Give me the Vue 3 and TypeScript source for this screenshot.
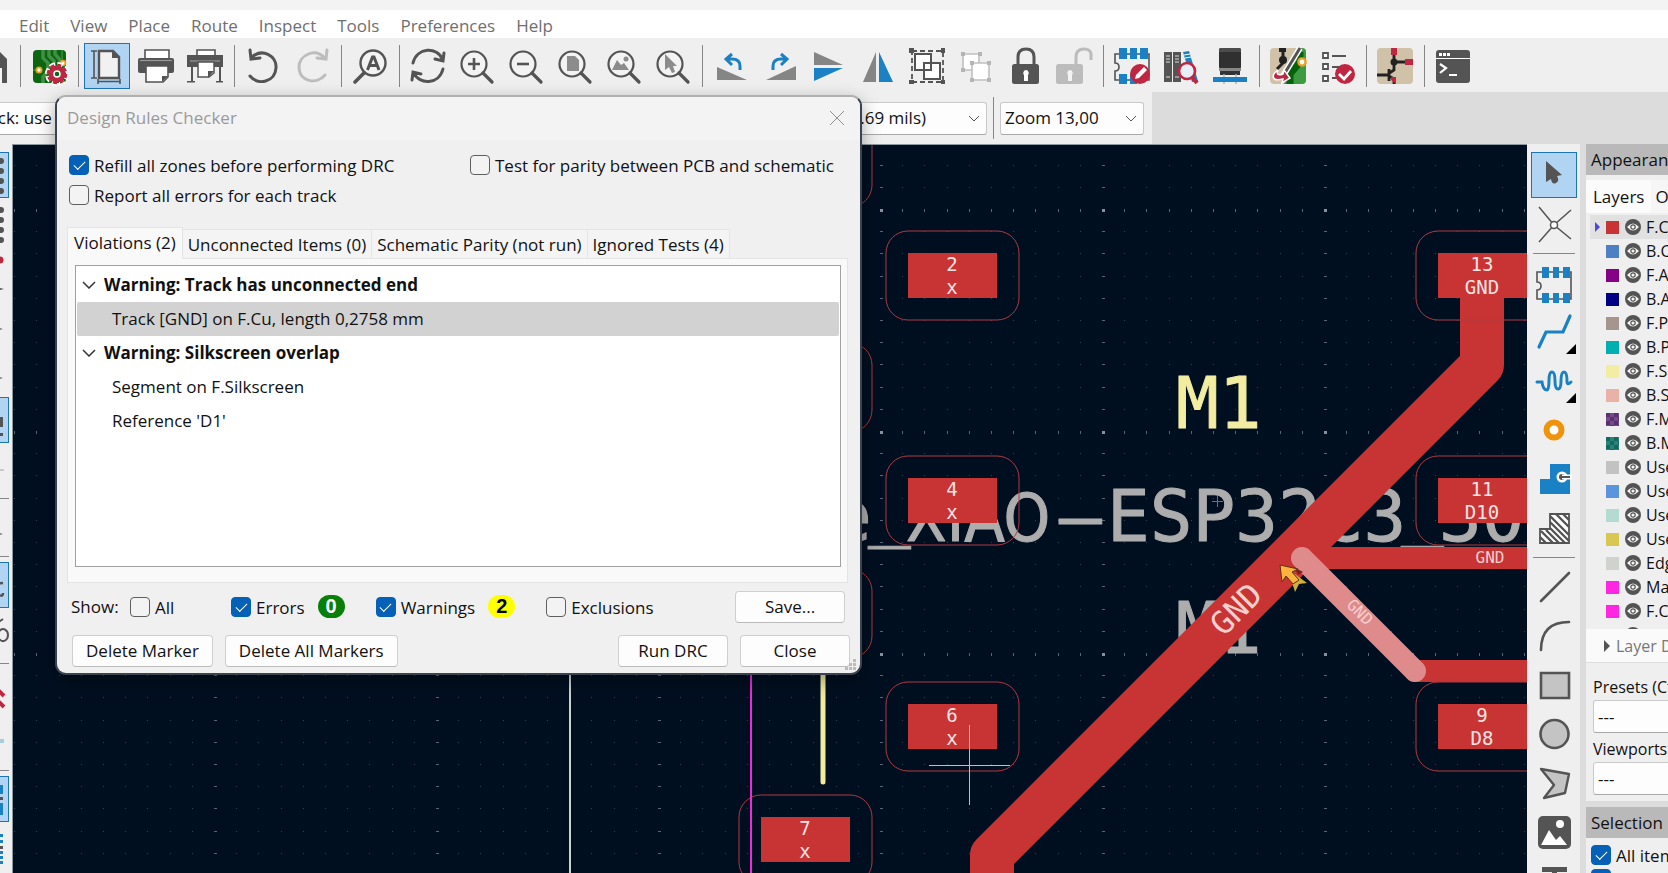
<script setup lang="ts">
import { ref } from 'vue'

const D = '#545454'
const B = '#1a81c4'
const R = '#bf2641'
const lens = `<circle cx="15" cy="16" r="12.5" fill="#f3f3f3" stroke="${D}" stroke-width="2.2"/><path d="M24 25l9 9" stroke="${D}" stroke-width="3.2" stroke-linecap="round"/>`
const footprint = `<path d="M1 7h34v27H1v-9q4 0 4-4t-4-4z" fill="none" stroke="${D}" stroke-width="1.6"/><g fill="${B}"><path d="M6 2h7v11H6zM17 2h6v11h-6zM27 2h7v11h-7zM6 28h7v10H6zM17 28h6v10h-6zM27 28h7v10h-7z"/></g>`

const icons: Record<string, string> = {
  save: `<path d="M2 3h24l8 8v24H2z" fill="${D}"/><path d="M9 20h20v15H9z" fill="#f5f5f5"/>`,
  board: `<rect x="2" y="2" width="33" height="33" rx="4" fill="#0c650f"/><path d="M12 2v8l5 5v8l-5 6v6M18 2v6l5 5v6M24 2v4l5 6v6" fill="none" stroke="#3f8f45" stroke-width="3.5"/><path d="M2 22h6M31 2v13" stroke="#2d8034" stroke-width="2"/><circle cx="8" cy="22" r="2.6" fill="#fff" stroke="#e8a01c" stroke-width="1.8"/><circle cx="32" cy="15" r="2.4" fill="#fff" stroke="#e8a01c" stroke-width="1.8"/><circle cx="26" cy="26" r="9" fill="none" stroke="#fff" stroke-width="6" stroke-dasharray="5 2.07"/><circle cx="26" cy="26" r="6" fill="#0c650f" stroke="${R}" stroke-width="5"/><circle cx="26" cy="26" r="8.6" fill="none" stroke="${R}" stroke-width="3.4" stroke-dasharray="3.8 2.95"/><circle cx="26" cy="26" r="3" fill="#0c650f" stroke="#fff" stroke-width="1.6"/>`,
  page: `<path d="M10 3h14l6 6v21H10z" fill="#f1f1f1" stroke="${D}" stroke-width="2.4"/><path d="M23 2v8h8z" fill="${D}"/><path d="M2 3h6M2 30h6M5 3v27M9 33.5h22M9 31v5M31 31v5" stroke="${D}" stroke-width="1.6"/>`,
  print: `<path d="M7 2h24v10H7z" fill="#fff" stroke="${D}" stroke-width="1.6"/><rect y="10" width="36" height="15" rx="2" fill="${D}"/><path d="M2 12.500h32" stroke="#9a9a9a" stroke-width="1.2"/><path d="M8 18h22v11l-5 5H8z" fill="#fff" stroke="${D}" stroke-width="1.600"/><path d="M30 28h-6v6z" fill="${D}"/>`,
  plot: `<path d="M10 2h18v6H10z" fill="#fff" stroke="${D}" stroke-width="1.600"/><path d="M0 7h36v12H0z" fill="${D}"/><path d="M3 13h30" stroke="#999" stroke-width="1.2"/><path d="M11 14h16v11l-5 4H11z" fill="#fff" stroke="${D}" stroke-width="1.500"/><path d="M27 23l-6 7v-7zM4 19h2v15H4zM32 19h2v15h-2zM0 33h8v1.600H0zM29 33h7v1.600h-7z" fill="${D}"/>`,
  undo: `<path d="M6 10C17-1 32 8 31 20c-1 14-18 18-26 8M5 2l1 9 9-1" fill="none" stroke="${D}" stroke-width="3" stroke-linecap="round"/>`,
  redo: `<path d="M31 10C20-1 5 8 5 19c0 15 18 18 26 8M33 2l-1 9-9-1" fill="none" stroke="#bdbdbd" stroke-width="3" stroke-linecap="round"/>`,
  find: `<circle cx="21" cy="15" r="12.5" fill="#f3f3f3" stroke="${D}" stroke-width="2.4"/><path d="M12 25l-9 9" stroke="${D}" stroke-width="3.600" stroke-linecap="round"/><path d="M15.500 22l5-13h1.500l5 13M17.500 17.500h7.500" fill="none" stroke="${D}" stroke-width="3"/>`,
  refresh: `<path d="M3 15C7-1 27-2 33 12M33 21C29 37 9 37 4 25M34 5l-1 8-8-2M2 32l1-8 8 2" fill="none" stroke="${D}" stroke-width="3" stroke-linecap="round"/>`,
  zoomin: `${lens}<path d="M9 16h12M15 10v12" stroke="${D}" stroke-width="2.6"/>`,
  zoomout: `${lens}<path d="M9 16h12" stroke="${D}" stroke-width="2.600"/>`,
  zoomfit: `${lens}<path d="M10 8h8l4 4v11H10z" fill="#8c8c8c"/>`,
  zoomimg: `${lens}<path d="M6 22l5-10 4 5 3-2 5 7z" fill="#8c8c8c"/><circle cx="20" cy="11" r="2.500" fill="#8c8c8c"/>`,
  zoomsel: `${lens}<path d="M10 6v16l4-3 3 6 3-1-2-6h4z" fill="#8c8c8c"/>`,
  rotl: `<path d="M4 19v13h30z" fill="#858585"/><path d="M27 22v-4q0-7-8-7h-5M19 6l-6 5 6 6" fill="none" stroke="${B}" stroke-width="3"/>`,
  rotr: `<path d="M34 18v14H4z" fill="#858585"/><path d="M11 22v-4q0-7 8-7h5M19 6l6 5-6 6" fill="none" stroke="${B}" stroke-width="3"/>`,
  flipv: `<path d="M3 4v13h29z" fill="#858585"/><path d="M3 33V20h29z" fill="${B}"/>`,
  fliph: `<path d="M3 34h13V4z" fill="#858585"/><path d="M33 34H19V4z" fill="${B}"/>`,
  group: `<path d="M3 3h31v31H3z" fill="none" stroke="${D}" stroke-width="1.800" stroke-dasharray="5 3"/><g fill="${D}"><path d="M0 0h5v5H0zM32 0h4v5h-4zM0 32h5v4H0zM32 32h4v4h-4z"/></g><path d="M6 6h16v16H6zM15 15h16v16H15z" fill="#fff" stroke="${D}" stroke-width="2"/>`,
  ungroup: `<path d="M5 6h16v16H5z" fill="#fff" stroke="#c0c0c0" stroke-width="1.600"/><path d="M14 15h17v17H14z" fill="#fff" stroke="#c0c0c0" stroke-width="1.600"/><g fill="#b5b5b5"><path d="M3 4h4v4H3zM20 4h4v4h-4zM3 20h4v4H3zM12 13h4v4h-4zM29 13h4v4h-4zM12 30h4v4h-4zM29 30h4v4h-4z"/></g>`,
  lock: `<path d="M11 17V9q0-8 8-8t8 8v8" fill="none" stroke="${D}" stroke-width="3"/><rect x="5" y="16" width="27" height="20" rx="2.500" fill="${D}"/><path d="M19 22a3 3 0 0 1 2 5v6h-4v-6a3 3 0 0 1 2-5z" fill="#fff"/>`,
  unlock: `<path d="M20 17V9q0-8 8-8t7 8v3" fill="none" stroke="#bcbcbc" stroke-width="3"/><rect y="16" width="27" height="20" rx="2.500" fill="#bcbcbc"/><path d="M14 22a3 3 0 0 1 2 5v6h-4v-6a3 3 0 0 1 2-5z" fill="#f3f3f3"/>`,
  fpedit: `<path d="M1 6h34v26H1v-9q4 0 4-4t-4-4z" fill="none" stroke="${D}" stroke-width="1.600"/><path d="M5 0h8v11H5zM16 0h7v11h-7zM26 0h8v11h-8zM5 26h8v10H5zM16 26h7v10h-7z" fill="${B}"/><circle cx="26" cy="26" r="10" fill="${R}"/><path d="M21 31l1-4 8-8 3 3-8 8z" fill="#fff"/>`,
  books: `<path d="M1 4h8v30H1zM10 4h8v30h-8z" fill="${D}"/><path d="M3 8h4M3 11h4M3 14h4M3 29h4M12 8h4M12 11h4M12 14h4M12 29h4" stroke="#ddd"/><path d="M20 4l6-1 9 30-6 1z" fill="${B}"/><path d="M21 7l6-1M22 10l6-1" stroke="#fff"/><circle cx="24" cy="23" r="8" fill="#e8eef8" stroke="${R}" stroke-width="2.600"/><path d="M29 29l5 6" stroke="${R}" stroke-width="4"/>`,
  chip: `<rect x="7" y="0" width="22" height="21" rx="2" fill="#303030"/><path d="M7 4V2q0-2 2-2h18q2 0 2 2v2z" fill="#4c4c4c"/><path d="M8 22h20v5H8z" fill="#333"/><path d="M7 20h22v3H7z" fill="#888"/><path d="M12 26v10M24 26v10" stroke="#a8b8c4" stroke-width="1.500"/><path d="M1 29h34v5H1z" fill="${B}"/>`,
  update: `<rect width="36" height="36" rx="4" fill="#cfc2a8"/><path d="M30 0h2q4 0 4 4v28q0 4-4 4H14z" fill="#3c9b41"/><path d="M30 4v10l-10 12v10" stroke="#07610a" stroke-width="7" fill="none"/><circle cx="32" cy="14" r="3.600" fill="#fff" stroke="#eaa127" stroke-width="2.400"/><path d="M13 0v15l-6 6" stroke="#222" stroke-width="3" fill="none"/><circle cx="13" cy="12" r="4" fill="#222"/><path d="M9 0h7v4H9z" fill="#222"/><path d="M30 0L13 28" stroke="#fff" stroke-width="6"/><path d="M30 0L13 28" stroke="${D}" stroke-width="3"/><path d="M8 22c-7 5-7 12 5 9l-1 4 8-5-6-8-1 4c-5 2-7 0-5-4z" fill="${R}" stroke="#fff" stroke-width="1.500"/>`,
  drc: `<path d="M4 5h5v5H4zM4 16h5v5H4zM4 28h5v5H4z" fill="#fff" stroke="${D}" stroke-width="1.800"/><path d="M13 8h14M13 19h8M13 30h6" stroke="${D}" stroke-width="1.800"/><circle cx="26" cy="26" r="10" fill="${R}"/><path d="M20 26l5 5 7-8" fill="none" stroke="#fff" stroke-width="2.800"/>`,
  sch: `<rect width="36" height="36" rx="4" fill="#cfc2a8"/><path d="M17 6v16l-6 4M17 14h12M0 27h12M12 21v12M12 28l5 3v5" stroke="#222" stroke-width="2.800" fill="none"/><path d="M14 0h6v7h-6zM28 11h8v6h-8zM14 29h5v7l-5-4z" fill="${R}"/><circle cx="17" cy="14" r="3.500" fill="#222"/>`,
  term: `<rect x="1" y="2" width="34" height="33" rx="3" fill="${D}"/><path d="M1 10.500h34" stroke="#fff"/><path d="M4 5h3v3H4zM8 5h3v3H8zM12 5h3v3h-3z" fill="#fff"/><path d="M5 16l6 4-6 5M14 27h8" fill="none" stroke="#fff" stroke-width="2.200"/>`,
  arrow: `<path d="M10 4v21l5-3q1 6 5 4t1-7l5-1z" fill="${D}"/>`,
  ratsnest: `<path d="M3 1l15 18L3 36M35 4L18 19l17 14" fill="none" stroke="${D}" stroke-width="1.500"/><circle cx="18" cy="19" r="3.500" fill="#fff" stroke="${D}" stroke-width="1.500"/>`,
  fp: footprint,
  route: `<path d="M3 33l7-15h17l7-16" fill="none" stroke="${B}" stroke-width="3.200" stroke-linecap="round"/>`,
  tune: `<path d="M1 19h5q1 8 5 8 2 0 2-10 0-8 3-8t3 9q0 8 3 8t3-8q0-9 3-9t3 9q0 5 4 1" fill="none" stroke="${B}" stroke-width="3" stroke-linecap="round"/>`,
  via: `<circle cx="18" cy="18" r="7.500" fill="#fff" stroke="#f0930c" stroke-width="6"/>`,
  zone: `<path d="M14 3h20v30H4V18h10z" fill="${B}"/><circle cx="26" cy="16" r="5.500" fill="#fff"/><circle cx="26" cy="16" r="3" fill="${D}"/><path d="M26 16h10" stroke="#fff" stroke-width="5"/><path d="M26 16h8" stroke="${D}" stroke-width="2"/>`,
  rule: `<path d="M14 4h19v29H4V19h10z" fill="#fff" stroke="${D}" stroke-width="1.800"/><path d="M14 6l19 19M14 12l19 19M14 18l15 15M10 20l13 13M5 21l12 12M4 27l6 6M20 4l13 13M27 4l6 6" stroke="${D}" stroke-width="2.400"/>`,
  line: `<path d="M5 32L33 4" stroke="${D}" stroke-width="2.600" stroke-linecap="round"/>`,
  arc: `<path d="M5 32Q5 4 33 4" fill="none" stroke="${D}" stroke-width="2.600" stroke-linecap="round"/>`,
  rect: `<path d="M5 6h28v25H5z" fill="#c4c4c4" stroke="${D}" stroke-width="2.600"/>`,
  circle: `<circle cx="18.500" cy="18" r="14" fill="#c4c4c4" stroke="${D}" stroke-width="2.600"/>`,
  poly: `<path d="M5 4l28 5-4 19-21 5 10-13z" fill="#c4c4c4" stroke="${D}" stroke-width="2.400" stroke-linejoin="round"/>`,
  image: `<rect x="2" y="2" width="33" height="33" rx="5" fill="${D}"/><path d="M5 31l8-15 7 10 4-4 7 9z" fill="#fff"/><circle cx="24" cy="10" r="4" fill="#fff"/>`,
  text: `<path d="M6 4h25v5H21v24h-5V9H6z" fill="${D}"/>`,
  dots: `<g fill="${D}"><circle cx="33" cy="4" r="3"/><circle cx="33" cy="14" r="3"/><circle cx="33" cy="24" r="3"/><circle cx="33" cy="34" r="3"/></g>`,
  polar: `<circle cx="32" cy="5" r="3.500" fill="${R}"/><path d="M28 32l8 2-8 2z" fill="${D}"/>`,
  tick: `<path d="M28 23l7 2-7 2z" fill="${D}"/>`,
  mm: `<path d="M31 15h4v10h-4zM29 31h6v3h-6z" fill="${D}"/>`,
  thin: `<path d="M24 19h12" stroke="#bbb" stroke-width="1.500"/>`,
  curve: `<path d="M26 17l9-1M32 28q3 2 3-2" stroke="${D}" stroke-width="2.500" fill="none"/>`,
  percent: `<path d="M28 8l7-5M30 19a5 6 0 1 1 0 .1" stroke="${D}" stroke-width="2" fill="none"/>`,
  chev: `<path d="M28 14l8 8M28 25l8 8" stroke="${R}" stroke-width="4"/>`,
  bar: `<path d="M26 16h10v4H26z" fill="#a8cde0"/>`,
  stack: `<path d="M26 4h9v9h-9zM26 22h9v12h-9z" fill="${B}"/><path d="M26 16h9v3h-9z" fill="${D}"/>`,
  bars: `<path d="M26 4h9v3h-9zM26 10h9v3h-9zM26 21h9v3h-9zM26 26h9v3h-9zM26 31h9v3h-9z" fill="${B}"/><path d="M26 16h9v3h-9z" fill="${D}"/>`,
}

interface Tool { id: string; label: string; on?: boolean; more?: boolean }
const sep: Tool = { id: '', label: '' }
const t = (id: string, label: string, extra: Partial<Tool> = {}): Tool => ({ id, label, ...extra })

const menus = ['Edit', 'View', 'Place', 'Route', 'Inspect', 'Tools', 'Preferences', 'Help']
const mainTools: Tool[] = [
  t('save', 'Save'), sep, t('board', 'Board setup'), sep,
  t('page', 'Page settings', { on: true }), t('print', 'Print'), t('plot', 'Plot'), sep,
  t('undo', 'Undo'), t('redo', 'Redo'), sep, t('find', 'Find'), sep,
  t('refresh', 'Refresh'), t('zoomin', 'Zoom in'), t('zoomout', 'Zoom out'), t('zoomfit', 'Zoom to fit'),
  t('zoomimg', 'Zoom to objects'), t('zoomsel', 'Zoom to selection'), sep,
  t('rotl', 'Rotate left'), t('rotr', 'Rotate right'), t('flipv', 'Mirror vertically'), t('fliph', 'Mirror horizontally'),
  t('group', 'Group'), t('ungroup', 'Ungroup'), t('lock', 'Lock'), t('unlock', 'Unlock'), sep,
  t('fpedit', 'Footprint editor'), t('books', 'Footprint libraries'), t('chip', '3D viewer'), sep,
  t('update', 'Update PCB from schematic'), t('drc', 'Design rules checker'), sep,
  t('sch', 'Schematic editor'), sep, t('term', 'Scripting console'),
]
const leftTools: Tool[] = [
  t('dots', 'Grid', { on: true }), t('dots', 'Grid overrides'), t('polar', 'Polar coordinates'), t('tick', 'Inches'),
  t('tick', 'Mils'), t('mm', 'Millimetres', { on: true }), t('thin', 'Full crosshair'), sep, t('tick', 'Free angle'), sep,
  t('curve', 'Ratsnest', { on: true }), t('percent', 'Curved ratsnest'), sep, t('chev', 'Inactive layers'), t('bar', 'Net highlight'), sep,
  t('stack', 'Zone fills', { on: true }), t('bars', 'Zone outlines'),
]
const rightTools: Tool[] = [
  t('arrow', 'Select', { on: true }), t('ratsnest', 'Local ratsnest'), sep, t('fp', 'Add footprint'),
  t('route', 'Route tracks', { more: true }), t('tune', 'Tune length', { more: true }), t('via', 'Add via'),
  t('zone', 'Add zone'), t('rule', 'Add rule area'), sep, t('line', 'Draw line'), t('arc', 'Draw arc'),
  t('rect', 'Draw rectangle'), t('circle', 'Draw circle'), t('poly', 'Draw polygon'), t('image', 'Add image'), t('text', 'Add text'),
]

const layers = [
  ['F.Cu', '#c83434'], ['B.Cu', '#4d7fc4'], ['F.Adhesive', '#840084'], ['B.Adhesive', '#000084'],
  ['F.Paste', '#a4968f'], ['B.Paste', '#00b0b0'], ['F.Silkscreen', '#f2eda1'], ['B.Silkscreen', '#e8b2a7'],
  ['F.Mask', '#5a2f73'], ['B.Mask', '#0f6b62'], ['User.Drawings', '#c2c2c2'], ['User.Comments', '#5994dc'],
  ['User.Eco1', '#b4dbd2'], ['User.Eco2', '#d8c852'], ['Edge.Cuts', '#d0d2cd'], ['Margin', '#ff26e2'],
  ['F.Courtyard', '#ff26e2'], ['B.Courtyard', '#26e9ff'],
].map(([name, color]) => ({ name, color, checked: name.endsWith('Mask') }))

const pads = [
  { x: 908, y: 253, n: '2', net: 'x' }, { x: 908, y: 478, n: '4', net: 'x' }, { x: 908, y: 704, n: '6', net: 'x' },
  { x: 761, y: 817, n: '7', net: 'x' }, { x: 761, y: 591, n: '', net: '' }, { x: 761, y: 365, n: '', net: '' },
  { x: 761, y: 140, n: '', net: '' },
  { x: 1438, y: 253, n: '13', net: 'GND' }, { x: 1438, y: 478, n: '11', net: 'D10' }, { x: 1438, y: 704, n: '9', net: 'D8' },
]

const steps = Array.from({ length: 10 }, (_, i) => Math.round(i * 22.2))
const gridDots = steps.flatMap((x, i) => steps.map((y, j) => ({
  x, y, w: i === 0 ? 3 : 1, h: j === 0 ? 3 : 1, o: i === 0 && j === 0 ? 0.75 : i === 0 || j === 0 ? 0.5 : 0.3,
})))

const tabs = ['Violations (2)', 'Unconnected Items (0)', 'Schematic Parity (not run)', 'Ignored Tests (4)']
const activeTab = ref(0)
const violations = [
  { title: 'Warning: Track has unconnected end', items: ['Track [GND] on F.Cu, length 0,2758 mm'] },
  { title: 'Warning: Silkscreen overlap', items: ['Segment on F.Silkscreen', "Reference 'D1'"] },
]
const selected = ref('Track [GND] on F.Cu, length 0,2758 mm')
const refill = ref(true)
const reportAll = ref(false)
const parity = ref(false)
const showAll = ref(false)
const showErrors = ref(true)
const showWarnings = ref(true)
const showExclusions = ref(false)
const allItems = ref(true)
const lockedItems = ref(true)
</script>

<template>
  <div class="app">
    <div class="strip"></div>
    <nav class="menubar">
      <button v-for="m in menus" :key="m" type="button">{{ m }}</button>
    </nav>
    <div class="toolbar">
      <template v-for="(tool, i) in mainTools" :key="i">
        <span v-if="!tool.id" class="vsep"></span>
        <button v-else type="button" class="tool" :class="{ on: tool.on }" :aria-label="tool.label">
          <svg viewBox="0 0 36 36" v-html="icons[tool.id]"></svg>
        </button>
      </template>
    </div>
    <div class="auxbar">
      <div class="aux-controls">
        <div class="combo track">
          <select aria-label="Track width"><option>Track: use netclass width</option></select>
        </div>
        <button type="button" class="tool on auto" aria-label="Automatic track width"></button>
        <div class="combo viasize">
          <select aria-label="Grid"><option>Grid: 0,5000 mm (19.69 mils)</option></select>
          <svg viewBox="0 0 12 8"><path d="M1 1l5 5 5-5" /></svg>
        </div>
        <span class="vsep"></span>
        <div class="combo zoom">
          <select aria-label="Zoom"><option>Zoom 13,00</option></select>
          <svg viewBox="0 0 12 8"><path d="M1 1l5 5 5-5" /></svg>
        </div>
      </div>
    </div>

    <div class="work">
      <div class="side left">
        <template v-for="(tool, i) in leftTools" :key="i">
          <span v-if="!tool.id" class="hsep"></span>
          <button v-else type="button" class="tool" :class="{ on: tool.on }" :aria-label="tool.label">
            <svg viewBox="0 0 36 36" v-html="icons[tool.id]"></svg>
          </button>
        </template>
      </div>

      <div class="board">
        <svg class="pcb">
          <defs>
            <pattern id="grid" width="222" height="222" patternUnits="userSpaceOnUse" x="214" y="209">
              <rect v-for="(d, i) in gridDots" :key="i" :x="d.x" :y="d.y" :width="d.w" :height="d.h" fill="#b4bcc4" :opacity="d.o" />
            </pattern>
          </defs>
          <g transform="translate(-13 -145)">
            <rect width="4000" height="3000" fill="url(#grid)" />
            <g class="fab">
              <text x="829" y="541">e</text>
              <text x="868" y="532">_</text>
              <text class="tight" x="906" y="541">XIAO</text>
              <text x="1059" y="541">–</text>
              <text x="1107" y="541">ESP32C3</text>
              <text x="1401" y="532">_</text>
              <text x="1439" y="541">30</text>
              <text x="1176" y="653">M1</text>
            </g>
            <text class="silk" x="1176" y="428">M1</text>
            <g class="tracks">
              <path d="M1482 275V365L992 855V1200" stroke-width="44" />
              <path d="M1302 558H1900M1415 671H1900" stroke-width="22" />
            </g>
            <path class="hot" d="M1302 558L1415 671" />
            <g v-for="(p, i) in pads" :key="i">
              <rect class="clearance" :x="p.x - 22" :y="p.y - 22" width="133" height="89" rx="22" />
              <rect class="pad" :x="p.x" :y="p.y" width="89" height="45" />
              <template v-if="p.n">
                <text class="padtext" :x="p.x + 44" :y="p.y + 18">{{ p.n }}</text>
                <text class="padtext" :x="p.x + 44" :y="p.y + 41">{{ p.net }}</text>
              </template>
            </g>
            <text class="net" x="1490" y="563">GND</text>
            <text class="net" transform="translate(1356 616) rotate(45)">GND</text>
            <text class="net big" transform="translate(1244 617) rotate(-45)">GND</text>
            <path d="M570 145V1200" stroke="#cdd2d0" stroke-width="2" />
            <path d="M751 145V1200" stroke="#ee2bdc" stroke-width="2" />
            <path d="M823 600V782" stroke="#f0eb9d" stroke-width="5" stroke-linecap="round" />
            <path d="M929 765.500H1010M969.500 725V805" stroke="#b9c0c6" />
            <path d="M1212 501.500H1223M1217.500 496V507" stroke="#d32bd6" />
            <path d="M1294 567l9 5-5 3z" fill="#7a2020" />
            <path d="M1288 569l19 14-8 1-4 8z" fill="#d3ae38" />
            <path d="M1280 565l18 4-6 3 7 8-6 4-7-8-4 6z" fill="#fbb33b" stroke="#5e3014" />
          </g>
        </svg>
      </div>

      <div class="side right">
        <template v-for="(tool, i) in rightTools" :key="i">
          <span v-if="!tool.id" class="hsep"></span>
          <button v-else type="button" class="tool" :class="{ on: tool.on, more: tool.more }" :aria-label="tool.label">
            <svg viewBox="0 0 36 36" v-html="icons[tool.id]"></svg>
          </button>
        </template>
      </div>

      <aside class="panel">
        <h2>Appearance</h2>
        <div class="ptabs">
          <button type="button" class="active">Layers</button>
          <button type="button">Objects</button>
        </div>
        <ul class="layers">
          <li v-for="(l, i) in layers" :key="l.name" :class="{ current: i === 0 }">
            <span class="marker"></span>
            <span class="swatch" :class="{ checked: l.checked }" :style="{ backgroundColor: l.color }"></span>
            <button type="button" class="eye" :aria-label="'Toggle ' + l.name">
              <svg viewBox="0 0 16 16">
                <circle cx="8" cy="8" r="8" fill="#545454" />
                <path d="M2 8q6-7 12 0-6 7-12 0z" fill="#f4f4f4" />
                <circle cx="8" cy="8" r="2.200" fill="#f4f4f4" stroke="#545454" stroke-width="1.200" />
              </svg>
            </button>
            <span>{{ l.name }}</span>
          </li>
        </ul>
        <button type="button" class="expander">
          <svg viewBox="0 0 6 12"><path d="M0 0l6 6-6 6z" /></svg>Layer Display Options
        </button>
        <div class="presets">
          <label for="presets">Presets (Ctrl+Tab):</label>
          <select id="presets"><option>---</option></select>
          <label for="viewports">Viewports (Shift+Tab):</label>
          <select id="viewports"><option>---</option></select>
        </div>
        <h2 class="filter">Selection Filter</h2>
        <div class="filters">
          <label class="check"><input v-model="allItems" type="checkbox" /><span>All items</span></label>
          <label class="check"><input v-model="lockedItems" type="checkbox" /><span>Locked items</span></label>
        </div>
      </aside>
    </div>

    <section class="dialog" role="dialog" aria-labelledby="dlg-title">
      <header>
        <h1 id="dlg-title">Design Rules Checker</h1>
        <button type="button" aria-label="Close window">
          <svg viewBox="0 0 16 16"><path d="M1 1l14 14M15 1L1 15" /></svg>
        </button>
      </header>
      <div class="options">
        <label class="check"><input v-model="refill" type="checkbox" /><span>Refill all zones before performing DRC</span></label>
        <label class="check"><input v-model="parity" type="checkbox" /><span>Test for parity between PCB and schematic</span></label>
        <label class="check"><input v-model="reportAll" type="checkbox" /><span>Report all errors for each track</span></label>
      </div>
      <div class="tabs" role="tablist">
        <button v-for="(name, i) in tabs" :key="name" type="button" role="tab" :aria-selected="activeTab === i"
          :class="{ active: activeTab === i }" @click="activeTab = i">{{ name }}</button>
      </div>
      <div class="pane">
        <ul class="tree">
          <li v-for="v in violations" :key="v.title">
            <div class="node">
              <svg viewBox="0 0 14 8"><path d="M1 1l6 6 6-6" /></svg>{{ v.title }}
            </div>
            <ul>
              <li v-for="item in v.items" :key="item" class="leaf" :class="{ sel: selected === item }" @click="selected = item">{{ item }}</li>
            </ul>
          </li>
        </ul>
      </div>
      <div class="show">
        <span class="lead">Show:</span>
        <label class="check all"><input v-model="showAll" type="checkbox" /><span>All</span></label>
        <label class="check"><input v-model="showErrors" type="checkbox" /><span>Errors</span></label>
        <span class="badge green">0</span>
        <label class="check"><input v-model="showWarnings" type="checkbox" /><span>Warnings</span></label>
        <span class="badge yellow">2</span>
        <label class="check"><input v-model="showExclusions" type="checkbox" /><span>Exclusions</span></label>
        <button type="button" class="btn short push">Save...</button>
      </div>
      <footer>
        <button type="button" class="btn">Delete Marker</button>
        <button type="button" class="btn">Delete All Markers</button>
        <button type="button" class="btn short push">Run DRC</button>
        <button type="button" class="btn short">Close</button>
      </footer>
      <svg class="grip" viewBox="0 0 12 12"><path d="M8 0h3v3H8zM4 4h3v3H4zM8 4h3v3H8zM0 8h3v3H0zM4 8h3v3H4zM8 8h3v3H8z" /></svg>
    </section>
  </div>
</template>

<style>
body { margin: 0; overflow: hidden; }
</style>

<style scoped>
* { box-sizing: border-box; }
.app {
  position: relative;
  height: 100vh;
  display: flex;
  flex-direction: column;
  overflow: hidden;
  background: #efefef;
  color: #111;
  font: 17px/24px "Open Sans", "Noto Sans", sans-serif;
}
button, select, input { font: inherit; color: inherit; margin: 0; }
button { border: 0; background: none; padding: 0; white-space: nowrap; }
ul { list-style: none; margin: 0; padding: 0; }
h1, h2 { margin: 0; font-size: 17px; font-weight: 400; white-space: nowrap; }

.strip { height: 10px; background: #f3f3f3; flex: none; }
.menubar { display: flex; flex: none; height: 28px; padding-left: 8px; background: #fff; color: #6f6f6f; }
.menubar button { padding: 3px 10px 0 11px; }

.toolbar { display: flex; flex: none; gap: 3px; height: 54px; padding-top: 5px; margin-left: -32px; }
.tool { position: relative; flex: none; width: 46px; height: 46px; display: grid; place-items: center; border: 1px solid transparent; }
.tool.on { background: #b1d4f2; border-color: #1c74b8; }
.tool svg { width: 36px; height: 36px; display: block; overflow: visible; }
.tool.more::after { content: ""; position: absolute; right: 0; bottom: 0; border: 5px solid #000; border-top-color: transparent; border-left-color: transparent; }
.vsep { flex: none; width: 6px; height: 42px; margin-top: 2px; background: linear-gradient(#868686, #868686) center / 1px 100% no-repeat; }
.hsep { flex: none; height: 6px; width: 42px; background: linear-gradient(#868686, #868686) center / 100% 1px no-repeat; }
.right .hsep { height: 7px; }

.auxbar { flex: none; height: 52px; background: #dcdcdc; display: flex; }
.aux-controls { display: flex; align-items: center; padding-right: 8px; background: #efefef; width: 1152px; }
.aux-controls .vsep { margin: 0 4px 0 3px; }
.combo { position: relative; height: 33px; }
.combo select, .presets select {
  appearance: none;
  width: 100%;
  height: 33px;
  padding: 0 4px;
  background: #fdfdfd;
  border: 1px solid #c9c9c9;
  border-bottom-color: #a8a8a8;
  border-radius: 3px;
}
.combo svg { position: absolute; right: 7px; top: 13px; width: 12px; height: 8px; fill: none; stroke: #555; }
.track { width: 231px; margin-left: -33px; }
.auto { align-self: flex-start; margin: 3px 0 0 3px; }
.viasize { flex: 1; margin-left: 3px; }
.viasize select { text-align-last: right; padding-right: 60px; }
.zoom { width: 144px; }

.work { flex: 1; min-height: 0; display: grid; grid-template-columns: 12px minmax(0, 1fr) 53px 88px; }
.side { display: flex; flex-direction: column; align-items: center; gap: 3px; padding-top: 8px; overflow: hidden; min-height: 0; }
.left { align-items: flex-end; padding-right: 3px; }
.board { background: #000f20; border: solid #8c9a9f; border-width: 1px 0 0 1px; min-height: 0; overflow: hidden; }
.pcb { display: block; width: 100%; height: 100%; }
.pcb text { font-family: "DejaVu Sans Mono", monospace; }
.fab text, .silk { font-size: 71px; fill: #adadad; stroke: #adadad; stroke-width: 1px; stroke-linejoin: round; }
.fab .tight { font-family: "DejaVu Sans Condensed", "DejaVu Sans", sans-serif; font-size: 66px; }
.silk { fill: #f2eda1; stroke: #f2eda1; }
.tracks path { fill: none; stroke: #c83434; stroke-linecap: round; stroke-linejoin: round; }
.hot { stroke: #df8b8c; stroke-width: 22px; stroke-linecap: round; }
.clearance { fill: none; stroke: #b03a41; }
.pad { fill: #c83434; }
.padtext { font-size: 19px; fill: #fbe3e3; text-anchor: middle; }
.net { font-size: 16px; fill: #f6cfcf; text-anchor: middle; }
.net.big { font-size: 32px; }

.panel { border-left: 6px solid #dcdcdc; display: flex; flex-direction: column; overflow: hidden; white-space: nowrap; min-height: 0; }
.panel > * { flex: none; }
.panel h2 { height: 31px; padding: 4px 5px; background: #b9b9b9; }
.panel h2.filter { border-top: 6px solid #dcdcdc; height: 37px; }
.ptabs { display: flex; padding-top: 5px; }
.ptabs button { height: 33px; padding: 0 4px; background: #f6f6f6; }
.ptabs .active { width: 75px; padding: 0 7px; text-align: left; background: #fbfbfb; }
.layers { height: 416px; padding-top: 2px; margin-left: 4px; overflow: hidden; font-size: 16px; }
.layers li { display: flex; align-items: center; height: 24px; }
.layers .current { background: #e1e1e1; }
.marker { flex: none; width: 16px; height: 10px; }
.current .marker::before { content: ""; display: block; width: 0; margin-left: 5px; border: 5px solid transparent; border-left-color: #4c48e0; border-right: 0; }
.swatch { flex: none; width: 13px; height: 13px; margin-right: 6px; }
.swatch.checked { background-image: conic-gradient(rgba(255, 255, 255, .14) 25%, transparent 0 50%, rgba(255, 255, 255, .14) 0 75%, transparent 0); background-size: 8px 8px; }
.eye { width: 16px; height: 16px; margin-right: 5px; flex: none; }
.eye svg { display: block; width: 16px; height: 16px; }
.expander { display: flex; align-items: center; gap: 6px; height: 34px; padding-left: 18px; background: #fafafa; color: #777; border-bottom: 1px solid #ddd; text-align: left; font-size: 16px; }
.expander svg { width: 6px; height: 12px; fill: #545454; flex: none; }
.presets { display: grid; padding: 12px 0 2px 7px; width: 260px; }
.presets label { height: 25px; font-size: 16px; }
.presets select { margin-bottom: 4px; }
.filters { display: grid; gap: 4px; padding: 7px 5px; }

.check { display: flex; align-items: center; gap: 5px; height: 20px; white-space: nowrap; }
.check span { padding-top: 2px; }
.check input { appearance: none; flex: none; width: 20px; height: 20px; border: 1px solid #5f5f5f; border-radius: 4px; background: #f3f3f3; display: grid; place-items: center; }
.check input:checked { background: #0560b8; border-color: #0560b8; }
.check input:checked::after { content: ""; width: 10px; height: 5px; border: solid #fff; border-width: 0 0 1px 1px; transform: translateY(-1px) rotate(-45deg); }

.dialog {
  position: absolute;
  left: 55px;
  top: 95px;
  width: 807px;
  display: flex;
  flex-direction: column;
  background: #f0f0f0;
  border: 2px solid #9c9fa0;
  border-color: #b0b0b0 #3a4450 #3a4450;
  border-radius: 11px;
  box-shadow: 0 6px 18px rgba(0, 0, 0, .35);
}
.dialog header { display: flex; justify-content: space-between; align-items: center; height: 43px; padding: 0 15px 2px 10px; background: #f3f3f3; border-radius: 9px 9px 0 0; color: #9a9a9a; }
.dialog header button, .dialog header svg { width: 16px; height: 16px; display: block; }
.dialog header svg { fill: none; stroke: #8f8f8f; }
.options { display: grid; grid-template-columns: 401px 1fr; row-gap: 10px; padding: 15px 12px 22px; }
.tabs { display: flex; align-items: flex-end; padding-left: 10px; height: 31px; }
.tabs button { height: 29px; padding: 2px 5px 0; background: #f4f4f4; border: 1px solid #e4e4e4; border-left: 0; border-bottom: 0; }
.tabs .active { height: 32px; margin-bottom: -1px; padding: 0 6px 1px; background: #f9f9f9; border-left: 1px solid #e4e4e4; position: relative; }
.pane { margin: 0 12px 0 10px; padding: 6px 6px 15px 7px; background: #f9f9f9; border: 1px solid #e4e4e4; }
.tree { height: 302px; padding: 2px 1px; background: #fff; border: 1px solid #a0a0a0; }
.node, .leaf { height: 34px; line-height: 34px; }
.node { display: flex; align-items: center; gap: 8px; padding-left: 5px; font-weight: 700; }
.node svg { width: 14px; height: 8px; fill: none; stroke: #333; stroke-width: 1.5px; }
.leaf { padding-left: 35px; border-radius: 2px; }
.leaf.sel { background: #d2d2d2; }
.show { display: flex; align-items: center; height: 47px; padding: 0 15px 0 14px; }
.lead { width: 59px; }
.all { width: 101px; }
.badge { width: 27px; height: 23px; margin: 0 31px 0 13px; border-radius: 12px; text-align: center; font: 700 20px/23px "Liberation Sans", Arial, sans-serif; }
.green { background: #087f08; color: #fff; }
.yellow { background: #ff0; color: #000; }
.btn { height: 32px; padding: 0 13px; background: #fdfdfd; border: 1px solid #cfcfcf; border-bottom-color: #bbb; border-radius: 4px; }
.btn.short { width: 110px; padding: 0; }
.push { margin-left: auto; }
.dialog footer { display: flex; gap: 12px; padding: 5px 10px 6px 15px; }
.grip { position: absolute; right: 3px; bottom: 2px; width: 12px; height: 12px; fill: #bbb; }
</style>
